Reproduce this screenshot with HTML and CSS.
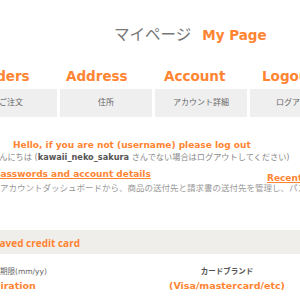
FILE: index.html
```html
<!DOCTYPE html>
<html>
<head>
  <meta charset="UTF-8">
  <title>マイページ</title>
  <link rel="stylesheet" href="styles.css">
</head>
<body>
  <div class="page-title">
    <span class="title-ja">マイページ</span>
    <span class="title-en">My Page</span>
  </div>

  <div class="nav-heads">
    <div>Orders</div>
    <div>Address</div>
    <div>Account</div>
    <div>Logout</div>
  </div>
  <div class="nav-boxes">
    <div class="nav-box">ご注文</div>
    <div class="nav-box">住所</div>
    <div class="nav-box">アカウント詳細</div>
    <div class="nav-box">ログアウト</div>
  </div>

  <div class="greeting">
    <p class="hello">Hello, if you are not (username) please log out</p>
    <p class="hello-ja">こんにちは (<b>kawaii_neko_sakura</b> さんでない場合はログアウトしてください)</p>
  </div>

  <div class="dash">
    <div class="dash-main">
      <a class="dash-link">passwords and account details</a>
      <p class="dash-text">アカウントダッシュボードから、商品の送付先と請求書の送付先を管理し、パスワードとアカウント詳細を編集できます。</p>
    </div>
    <div class="dash-side">
      <a class="dash-link">Recent orders</a>
    </div>
  </div>

  <div class="band">
    <span>Saved credit card</span>
  </div>

  <div class="card-row">
    <div class="card-col">
      <div class="card-label">有効期限(mm/yy)</div>
      <div class="card-value">Expiration</div>
    </div>
    <div class="card-col brand">
      <div class="card-label strong">カードブランド</div>
      <div class="card-value">(Visa/mastercard/etc)</div>
    </div>
  </div>
</body>
</html>
```

FILE: styles.css
```css
body {
  margin: 0;
  width: 300px;
  height: 300px;
  overflow: hidden;
  font-family: "DejaVu Sans", "Noto Sans CJK JP", sans-serif;
  color: #777;
  background: #fff;
}
p {
  margin: 0;
}
a {
  cursor: pointer;
}

.page-title {
  padding: 22px 0 0 114px;
  height: 23px;
  white-space: nowrap;
}
.title-ja {
  font-size: 15.5px;
  color: #777;
}
.title-en {
  margin-left: 6px;
  font-size: 13.5px;
  font-weight: bold;
  color: #ff8533;
}

/* ナビゲーション */
.nav-heads {
  display: grid;
  grid-template-columns: 88px 98px 98px 98px;
  margin: 23px 0 0 -22px;
  font-size: 13.5px;
  font-weight: bold;
  color: #ff8533;
  line-height: 16px;
  white-space: nowrap;
}
.nav-boxes {
  display: grid;
  grid-template-columns: repeat(4, 92px);
  gap: 3px;
  margin: 5px 0 0 -35px;
}
.nav-box {
  height: 28px;
  line-height: 28px;
  text-align: center;
  background: #efefef;
  font-size: 8px;
  color: #666;
  white-space: nowrap;
}

.greeting {
  margin-top: 22px;
  white-space: nowrap;
}
.hello {
  padding-left: 13px;
  font-size: 9px;
  font-weight: bold;
  color: #ff8533;
  line-height: 12px;
}
.hello-ja {
  margin-left: -9px;
  font-size: 8.2px;
  color: #888;
  line-height: 12px;
}
.hello-ja b {
  color: #555;
}

.dash {
  display: flex;
  margin-top: 4px;
  white-space: nowrap;
  line-height: 14px;
}
.dash-main {
  width: 267px;
  flex: none;
}
.dash-link {
  display: block;
  font-size: 9px;
  font-weight: bold;
  color: #ff8533;
  text-decoration: underline;
  line-height: 14px;
}
.dash-main .dash-link {
  margin-left: -6px;
}
.dash-text {
  font-size: 8.5px;
  color: #999;
  line-height: 14px;
}
.dash-side {
  padding-top: 4px;
}

.band {
  margin-top: 35px;
  height: 24px;
  line-height: 24px;
  background: #f0eeea;
  white-space: nowrap;
}
.band span {
  display: inline-block;
  margin-left: -6px;
  font-family: "Open Sans", sans-serif;
  font-size: 10px;
  font-weight: bold;
  color: #ff8533;
}

.card-row {
  display: flex;
  margin-top: 12px;
  white-space: nowrap;
}
.card-col {
  width: 150px;
}
.card-col:first-child .card-label {
  margin-left: -15px;
}
.card-col:first-child .card-value {
  margin-left: -19px;
}
.brand {
  padding-left: 77px;
  width: 0;
  display: flex;
  flex-direction: column;
  align-items: center;
}
.card-label {
  font-size: 7.5px;
  color: #666;
  line-height: 12px;
}
.card-label.strong {
  font-weight: bold;
  color: #555;
}
.card-value {
  font-size: 9.5px;
  font-weight: bold;
  color: #ff8533;
  line-height: 16px;
}
```
